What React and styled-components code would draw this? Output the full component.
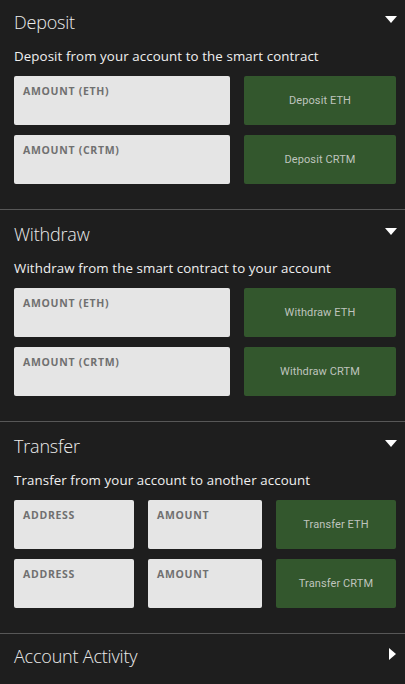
import React from 'react';
import styled, { createGlobalStyle } from 'styled-components';

const GlobalStyle = createGlobalStyle`
  html, body {
    margin: 0;
    padding: 0;
    background: #1e1e1e;
  }
  * {
    box-sizing: border-box;
  }
`;

const Panel = styled.div`
  width: 405px;
  background: #1e1e1e;
  color: #f2f2f2;
  font-family: 'Open Sans', 'Noto Sans', sans-serif;
`;

const Section = styled.section`
  padding: ${(p) => p.$top} 9px 25px 14px;
  border-bottom: ${(p) => (p.$last ? 'none' : '1px solid #575757')};
`;

const Header = styled.div`
  display: flex;
  align-items: center;
  justify-content: space-between;
  height: 26px;
`;

const Title = styled.h2`
  margin: 0;
  font-family: 'Open Sans', sans-serif;
  font-weight: 300;
  font-size: 18px;
  color: #ececec;
  letter-spacing: -0.2px;
`;

const Caret = styled.span`
  width: 0;
  height: 0;
  ${(p) =>
    p.$right
      ? `
    border-top: 6px solid transparent;
    border-bottom: 6px solid transparent;
    border-left: 7px solid #fff;
    margin-top: -4px;
  `
      : `
    border-left: 6px solid transparent;
    border-right: 6px solid transparent;
    border-top: 7px solid #fff;
    margin-top: -6px;
    margin-right: -1px;
  `}
`;

const Subtitle = styled.p`
  margin: 12px 0 11px;
  font-size: 13.3px;
  line-height: 18px;
  color: #f0f0f0;
  letter-spacing: 0.1px;
`;

const Rows = styled.div`
  display: flex;
  flex-direction: column;
  gap: 10px;
`;

const Row = styled.div`
  display: grid;
  grid-template-columns: ${(p) => p.$cols};
  gap: 14px;
`;

const Field = styled.div`
  height: 49px;
  background: #e5e5e5;
  border-radius: 2px;
  padding: 9px 9px;
`;

const Label = styled.span`
  display: block;
  font-family: 'Open Sans', sans-serif;
  font-weight: 700;
  font-size: 10.5px;
  line-height: 12px;
  letter-spacing: 0.7px;
  color: #707070;
`;

const Button = styled.button`
  height: 49px;
  border: none;
  border-radius: 2px;
  background: #33572d;
  color: #bfc4bd;
  font-family: 'Roboto', 'Liberation Sans', sans-serif;
  font-size: 11px;
  letter-spacing: 0.1px;
  cursor: pointer;
`;

const sections = [
  {
    title: 'Deposit',
    text: 'Deposit from your account to the smart contract',
    cols: '216px 1fr',
    rows: [
      { fields: ['AMOUNT (ETH)'], action: 'Deposit ETH' },
      { fields: ['AMOUNT (CRTM)'], action: 'Deposit CRTM' },
    ],
  },
  {
    title: 'Withdraw',
    text: 'Withdraw from the smart contract to your account',
    cols: '216px 1fr',
    rows: [
      { fields: ['AMOUNT (ETH)'], action: 'Withdraw ETH' },
      { fields: ['AMOUNT (CRTM)'], action: 'Withdraw CRTM' },
    ],
  },
  {
    title: 'Transfer',
    text: 'Transfer from your account to another account',
    cols: '120px 114px 1fr',
    rows: [
      { fields: ['ADDRESS', 'AMOUNT'], action: 'Transfer ETH' },
      { fields: ['ADDRESS', 'AMOUNT'], action: 'Transfer CRTM' },
    ],
  },
];

export default function App() {
  return (
    <>
      <GlobalStyle />
      <Panel>
        {sections.map((s, i) => (
          <Section key={s.title} $top={i === 0 ? '9px' : '11px'}>
            <Header>
              <Title>{s.title}</Title>
              <Caret />
            </Header>
            <Subtitle>{s.text}</Subtitle>
            <Rows>
              {s.rows.map((r) => (
                <Row key={r.action} $cols={s.cols}>
                  {r.fields.map((f, j) => (
                    <Field key={j}>
                      <Label>{f}</Label>
                    </Field>
                  ))}
                  <Button>{r.action}</Button>
                </Row>
              ))}
            </Rows>
          </Section>
        ))}
        <Section $last $top="9px">
          <Header>
            <Title>Account Activity</Title>
            <Caret $right />
          </Header>
        </Section>
      </Panel>
    </>
  );
}
